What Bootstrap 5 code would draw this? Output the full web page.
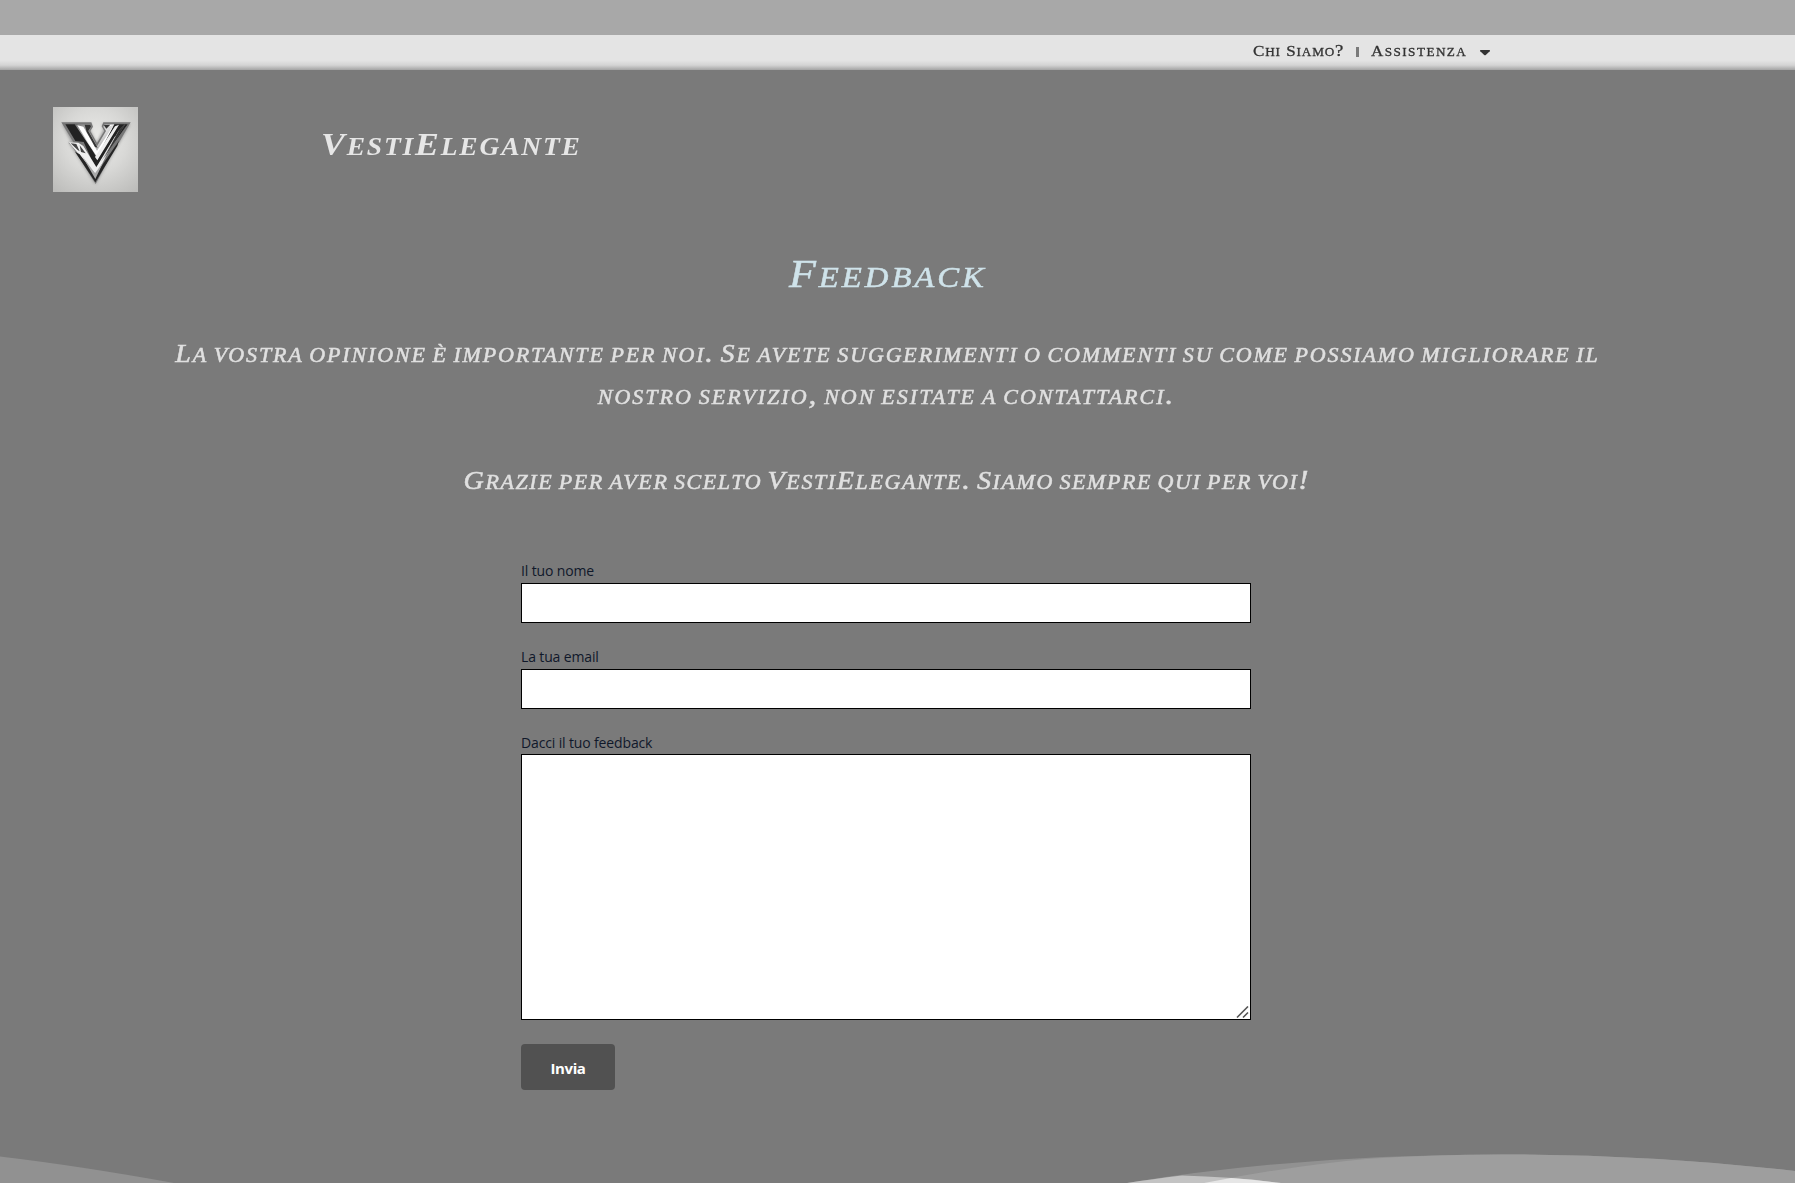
<!DOCTYPE html>
<html lang="it">
<head>
<meta charset="utf-8">
<title>VestiElegante - Feedback</title>
<link href="https://cdn.jsdelivr.net/npm/bootstrap@5.3.0/dist/css/bootstrap.min.css" rel="stylesheet">
<script src="https://cdn.jsdelivr.net/npm/bootstrap@5.3.0/dist/js/bootstrap.bundle.min.js" defer></script>
<style>
body{background:#7a7a7a;height:1183px;overflow:hidden;font-family:"Open Sans","Noto Sans",sans-serif}
.strip{height:35px;background:#a8a8a8}
.menu-bar{height:35px;padding-left:1253px;background:linear-gradient(#e4e4e4 72%,#d4d4d4 86%,#a4a4a4);font:17px "Liberation Serif",serif;font-variant:small-caps}
.menu-bar a{color:#333;text-decoration:none;line-height:30px;-webkit-text-stroke:.3px #333}
.menu-bar .wide{padding-bottom:3px}
.menu-bar i{font-style:normal;font-size:15.5px}
.wide{display:inline-block;transform:scaleX(1.1);transform-origin:0 50%;white-space:nowrap}
.m-about{width:91px;letter-spacing:.75px}
.m-help{width:109px;letter-spacing:1.3px}
.sep{width:3px;height:10px;background:#7a7a7a;margin:0 12px 1px}
.brand-row{height:122px;padding:37px 0 0 53px}
.brand-row svg{flex:none}
.brand-name{font:italic bold 36px/40px "Liberation Serif",serif;font-variant:small-caps;color:#e6e6e6;margin:16px 0 0 183px;letter-spacing:1.65px}
.brand-name i{font-size:32.5px;line-height:1}
.page-title{font:italic 42px/50px "Liberation Serif",serif;font-variant:small-caps;color:#cfe3ea;padding-left:789px;margin:56px 0 0;letter-spacing:2.6px;-webkit-text-stroke:.5px #cfe3ea}
.page-title .wide{transform:scaleX(1.13)}
.page-title i{font-size:39px;line-height:1}
.intro{font:italic 28px/42.4px "Liberation Serif",serif;font-variant:small-caps;color:#e0e0e0;margin-top:34px;height:170px;padding-right:21px;word-spacing:-3.5px;-webkit-text-stroke:.5px #e0e0e0}
.intro .wide{transform-origin:50% 50%;height:42.4px;vertical-align:top}
.intro i{font-size:25.5px;line-height:1}
.l1{letter-spacing:1.68px}.l2{letter-spacing:1.83px}.l3{letter-spacing:1.46px}
.send-form{width:730px;margin-left:521px;margin-top:58px}
.send-form label{font-size:14px;line-height:20px;color:#10182a;display:block;padding-top:.5px;margin-bottom:2.5px;letter-spacing:-.14px}
.send-form .form-control{border:1px solid #000;border-radius:0;height:40px;margin-bottom:23px;background:#fff}
.msg-box{position:relative;margin-top:-1px}
.send-form textarea.form-control{height:266px;margin-bottom:24px;resize:none}
.grip{position:absolute;right:2px;bottom:1px}
.send-form .btn{width:94px;height:46px;background:#515151;color:#fff;font-weight:700;font-size:15px;letter-spacing:-.4px;border-radius:4px;padding:2px 0 0;border:0}
.waves{position:absolute;left:0;top:1143px;display:block}
</style>
</head>
<body>
<div class="strip"></div>
<nav class="menu-bar d-flex align-items-center"><a class="wide m-about"><i>C</i>hi <i>S</i>iamo?</a><span class="sep"></span><a class="wide m-help"><i>A</i>ssistenza</a><svg width="10" height="6" viewBox="0 0 10 6"><path d="M.3 0h9.4q.5.6 0 1.2L5.8 5q-.8.7-1.6 0L.3 1.2q-.5-.6 0-1.2z" fill="#333"/></svg></nav>
<div class="brand-row d-flex">
<svg width="85" height="85" viewBox="39 36 255 255">
<defs>
<radialGradient id="bg" cx=".5" cy=".4" r=".75"><stop offset="0" stop-color="#ececea"/><stop offset=".5" stop-color="#d8d8d6"/><stop offset="1" stop-color="#bcbcba"/></radialGradient>
<linearGradient id="ch" x1="0" y1="0" x2="1" y2="1"><stop offset="0" stop-color="#777"/><stop offset=".5" stop-color="#ddd"/><stop offset="1" stop-color="#666"/></linearGradient>
<filter id="sh" x="-20%" y="-20%" width="140%" height="140%"><feGaussianBlur stdDeviation="4"/></filter>
</defs>
<path fill="url(#bg)" d="M39 36h255v255H39z"/>
<path d="M66 86h88l-3 20 19 38 20-38-3-20h84L166 268 86 142h8z" fill="#888" filter="url(#sh)" opacity=".8"/>
<path d="M64 82h90l5 13-8 13 20 36 22-36-8-14 5-12h82l-34 59-8 6-63 120-70-112-12-12h16z" fill="#777"/>
<path d="M76 88h36l57 99 54-99h40l-94 128-16-26-22-49-25-3z" fill="#222"/>
<path d="M104 88h46l4 7-8 13 25 46 27-46-8-13 3-7h30l-52 97z" fill="url(#ch)"/>
<path d="M112 91l18 4 41 72 50-77-50 96zM197 89l23 2-22 5z" fill="#fff"/>
<path d="M134 89h17l2 6-8 13 28 50-8-2-25-45zM191 89h20l-12 12z" fill="#333"/>
<path d="M225 94l12-5-65 107-7-10zM86 142l29 1 15 10 39 64 57-95 2 3-59 115z" fill="#eee"/>
<path d="M92 145l17 2 10 22-6-4zM119 151l18 24-14-4z" fill="#444"/>
<path d="M105 170l14 8 47 62 71-103-5 16-66 109z" fill="#252525"/>
<path d="M126 182l39 53 25-34-24 51zM235 108l-52 92 20-27 53-86z" fill="#aaa"/>
<path d="M237 106l19-18-26 43-39 60z" fill="#333"/>
</svg>
<div class="brand-name"><span class="wide"><i>V</i>esti<i>E</i>legante</span></div></div>
<h1 class="page-title"><span class="wide"><i>F</i>eedback</span></h1>
<div class="intro text-center">
<span class="wide l1"><i>L</i>a vostra opinione è importante per noi. <i>S</i>e avete suggerimenti o commenti su come possiamo migliorare il</span><br>
<span class="wide l2">nostro servizio, non esitate a contattarci.</span><br><br>
<span class="wide l3"><i>G</i>razie per aver scelto <i>V</i>esti<i>E</i>legante. <i>S</i>iamo sempre qui per voi!</span></div>
<form class="send-form">
<label for="nome">Il tuo nome</label><input id="nome" class="form-control" type="text">
<label for="email">La tua email</label><input id="email" class="form-control" type="email">
<label for="msg">Dacci il tuo feedback</label>
<div class="msg-box"><textarea id="msg" class="form-control"></textarea><svg class="grip" width="13" height="13" viewBox="0 0 13 13"><path d="M1 11.5L12 .5M7 11.5l5-5" stroke="#555" stroke-width="1.6" fill="none"/></svg></div>
<button type="button" class="btn">Invia</button>
</form>
<svg class="waves" width="1795" height="40" viewBox="0 1143 1795 40">
<path d="M0 1156.5Q80 1166 174 1183H0z" fill="#919191"/>
<path d="M1127 1183Q1300 1154.5 1500 1154.5Q1650 1154.5 1795 1171V1183z" fill="#919191"/>
<path d="M1204 1183Q1290 1166 1366 1159Q1430 1154.5 1500 1154.5Q1650 1154.5 1795 1171V1183z" fill="#9e9e9e"/>
<path d="M1127 1183Q1152 1179 1182 1175.5Q1235 1177 1281 1183z" fill="#c3c3c3"/>
<path d="M1204 1183L1231 1178Q1258 1180 1281 1183z" fill="#e6e6e6"/>
</svg>
</body>
</html>
